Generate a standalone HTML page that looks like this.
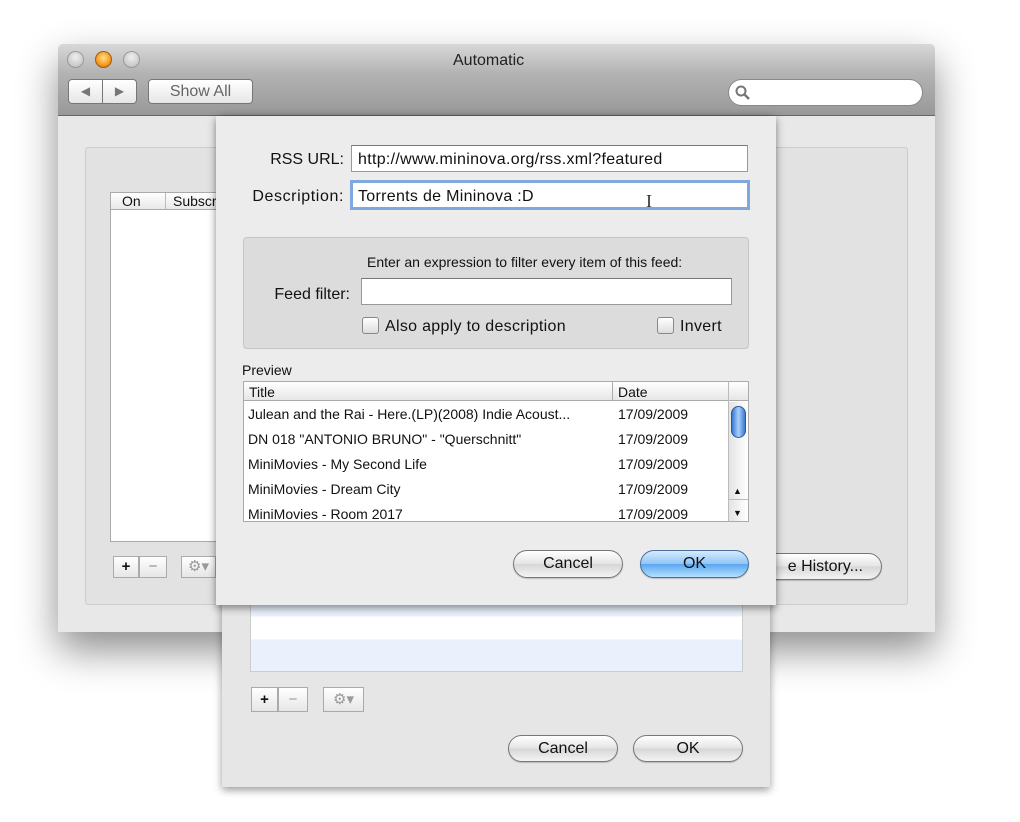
<!DOCTYPE html>
<html><head><meta charset="utf-8"><style>
*{box-sizing:border-box;margin:0;padding:0}
body{width:1020px;height:822px;background:#fff;position:relative;overflow:hidden;font-family:"Liberation Sans",sans-serif;color:#111}
.a{position:absolute}
.t{position:absolute;font-size:15px;white-space:nowrap;line-height:18px}
.r{text-align:right}
.btn{position:absolute;border:1px solid #777;border-radius:14px;background:linear-gradient(#fff,#e4e4e4 50%,#d6d6d6 51%,#f4f4f4);font-size:16px;text-align:center;box-shadow:0 1px 1px rgba(0,0,0,.2)}
.ok{background:linear-gradient(#d6ebff,#8fc4f5 50%,#5aa6ef 51%,#b4e0ff);border-color:#4a6f9a}
.fld{position:absolute;background:#fff;border:1px solid #999;border-top-color:#777}
.sq{position:absolute;border:1px solid #aaa;background:linear-gradient(#fff,#e6e6e6);font-size:15px;text-align:center;line-height:20px;color:#333}
.cb{position:absolute;width:17px;height:17px;border:1px solid #888;border-radius:3px;background:linear-gradient(#fff,#ddd)}
.tl{position:absolute;width:17px;height:17px;border-radius:50%;background:radial-gradient(circle at 50% 35%,#eee,#bbb);border:1px solid #999}
</style></head><body>
<div class="a" style="left:58px;top:44px;width:877px;height:588px;background:#e8e8e8;box-shadow:0 18px 40px rgba(0,0,0,.45);border-radius:5px 5px 0 0"></div>
<div class="a" style="left:58px;top:44px;width:877px;height:72px;background:linear-gradient(#d8d8d8,#b4b4b4 40%,#989898);border-radius:5px 5px 0 0;border-bottom:1px solid #666"></div>
<div class="tl" style="left:67px;top:51px"></div>
<div class="tl" style="left:95px;top:51px;background:radial-gradient(circle at 50% 40%,#ffe08a,#f59a20 60%,#c66a00);border-color:#a65a10"></div>
<div class="tl" style="left:123px;top:51px"></div>
<div class="t" style="left:453px;top:52px;font-size:16px;color:#222">Automatic</div>
<div class="sq" style="left:68px;top:79px;width:35px;height:25px;border-radius:4px 0 0 4px;color:#777;font-size:12px;line-height:23px;border-color:#777">◀</div>
<div class="sq" style="left:102px;top:79px;width:35px;height:25px;border-radius:0 4px 4px 0;color:#777;font-size:12px;line-height:23px;border-color:#777">▶</div>
<div class="sq" style="left:148px;top:79px;width:105px;height:25px;border-radius:4px;color:#666;font-size:16px;line-height:23px;border-color:#777">Show All</div>
<div class="a" style="left:728px;top:79px;width:195px;height:27px;background:#fff;border-radius:14px;border:1px solid #888"></div>
<svg class="a" style="left:734px;top:84px" width="18" height="18"><circle cx="7" cy="7" r="4.5" fill="none" stroke="#777" stroke-width="2"/><path d="M10 10l5 5" stroke="#777" stroke-width="2.5"/></svg>
<div class="a" style="left:85px;top:147px;width:823px;height:458px;background:#e2e2e2;border:1px solid #ccc;border-radius:3px"></div>
<div class="a" style="left:110px;top:192px;width:110px;height:350px;background:#fff;border:1px solid #aaa"></div>
<div class="a" style="left:110px;top:192px;width:110px;height:18px;background:linear-gradient(#fff,#e8e8e8);border:1px solid #aaa"></div>
<div class="t" style="left:122px;top:192px;font-size:14px">On</div>
<div class="a" style="left:165px;top:193px;width:1px;height:17px;background:#bbb"></div>
<div class="t" style="left:173px;top:192px;font-size:14px">Subscr</div>
<div class="sq" style="left:113px;top:556px;width:26px;height:22px;font-weight:bold;color:#111">+</div>
<div class="sq" style="left:139px;top:556px;width:28px;height:22px;color:#888">−</div>
<div class="sq" style="left:181px;top:556px;width:35px;height:22px;color:#999">⚙▾</div>
<div class="btn" style="left:740px;top:553px;width:142px;height:27px;line-height:25px;text-align:right;padding-right:18px">e History...</div>
<div class="a" style="left:222px;top:116px;width:548px;height:671px;background:#e6e6e6;box-shadow:0 3px 8px rgba(0,0,0,.4)"></div>
<div class="a" style="left:250px;top:600px;width:493px;height:72px;border:1px solid #ccc;background:linear-gradient(#eaf1fc 0,#eaf1fc 22%,#fff 22%,#fff 55%,#eaf1fc 55%)"></div>
<div class="sq" style="left:251px;top:687px;width:27px;height:25px;font-weight:bold;color:#111;line-height:23px">+</div>
<div class="sq" style="left:278px;top:687px;width:30px;height:25px;color:#999;line-height:23px">−</div>
<div class="sq" style="left:323px;top:687px;width:41px;height:25px;color:#999;line-height:23px">⚙▾</div>
<div class="btn" style="left:508px;top:735px;width:110px;height:27px;line-height:25px">Cancel</div>
<div class="btn" style="left:633px;top:735px;width:110px;height:27px;line-height:25px">OK</div>
<div class="a" style="left:216px;top:116px;width:560px;height:489px;background:#ececec;box-shadow:0 3px 8px rgba(0,0,0,.45)"></div>
<div class="t" style="left:240px;top:151px;width:104px;font-size:16px;text-align:right">RSS URL:</div>
<div class="fld" style="left:351px;top:145px;width:397px;height:27px"></div>
<div class="t" style="left:358px;top:151px;font-size:16px;letter-spacing:.3px">http://www.mininova.org/rss.xml?featured</div>
<div class="t" style="left:240px;top:188px;width:104px;font-size:16px;letter-spacing:.6px;text-align:right">Description:</div>
<div class="fld" style="left:350px;top:180px;width:400px;height:30px;border:3px solid #7fa9dc"></div>
<div class="t" style="left:358px;top:188px;font-size:16px;letter-spacing:.3px">Torrents de Mininova :D</div>
<div class="t" style="left:646px;top:192px;font-size:18px;color:#333;font-family:'Liberation Serif',serif">I</div>
<div class="a" style="left:243px;top:237px;width:506px;height:112px;background:#dcdcdc;border:1px solid #c4c4c4;border-radius:4px"></div>
<div class="t" style="left:367px;top:253px;font-size:14px">Enter an expression to filter every item of this feed:</div>
<div class="t" style="left:250px;top:286px;width:100px;font-size:16px;text-align:right">Feed filter:</div>
<div class="fld" style="left:361px;top:278px;width:371px;height:27px"></div>
<div class="cb" style="left:362px;top:317px"></div>
<div class="t" style="left:385px;top:318px;font-size:16px;letter-spacing:.3px">Also apply to description</div>
<div class="cb" style="left:657px;top:317px"></div>
<div class="t" style="left:680px;top:318px;font-size:16px;letter-spacing:.3px">Invert</div>
<div class="t" style="left:242px;top:361px;font-size:14px">Preview</div>
<div class="a" style="left:243px;top:381px;width:506px;height:141px;background:#fff;border:1px solid #aaa"></div>
<div class="a" style="left:244px;top:382px;width:504px;height:19px;background:linear-gradient(#fff,#e6e6e6);border-bottom:1px solid #aaa"></div>
<div class="a" style="left:612px;top:382px;width:1px;height:19px;background:#aaa"></div>
<div class="a" style="left:728px;top:382px;width:1px;height:139px;background:#bbb"></div>
<div class="t" style="left:249px;top:383px;font-size:14px">Title</div>
<div class="t" style="left:618px;top:383px;font-size:14px">Date</div>
<div class="a" style="left:729px;top:402px;width:19px;height:119px;background:linear-gradient(90deg,#e4e4e4,#fff)"></div>
<div class="a" style="left:731px;top:406px;width:15px;height:32px;border-radius:8px;background:linear-gradient(90deg,#3a78d0,#a9d0fa,#3a78d0);border:1px solid #2a5aa0"></div>
<div class="t" style="left:733px;top:482px;font-size:9px">▲</div>
<div class="t" style="left:733px;top:504px;font-size:9px">▼</div>
<div class="a" style="left:729px;top:499px;width:19px;height:1px;background:#bbb"></div>
<div class="t" style="left:248px;top:405px;font-size:14px">Julean and the Rai - Here.(LP)(2008) Indie Acoust...</div>
<div class="t" style="left:248px;top:430px;font-size:14px">DN 018 "ANTONIO BRUNO" - "Querschnitt"</div>
<div class="t" style="left:248px;top:455px;font-size:14px">MiniMovies - My Second Life</div>
<div class="t" style="left:248px;top:480px;font-size:14px">MiniMovies - Dream City</div>
<div class="t" style="left:248px;top:505px;font-size:14px">MiniMovies - Room 2017</div>
<div class="t" style="left:618px;top:405px;font-size:14px">17/09/2009</div>
<div class="t" style="left:618px;top:430px;font-size:14px">17/09/2009</div>
<div class="t" style="left:618px;top:455px;font-size:14px">17/09/2009</div>
<div class="t" style="left:618px;top:480px;font-size:14px">17/09/2009</div>
<div class="t" style="left:618px;top:505px;font-size:14px">17/09/2009</div>
<div class="btn" style="left:513px;top:550px;width:110px;height:28px;line-height:26px">Cancel</div>
<div class="btn ok" style="left:640px;top:550px;width:109px;height:28px;line-height:26px">OK</div>
</body></html>
